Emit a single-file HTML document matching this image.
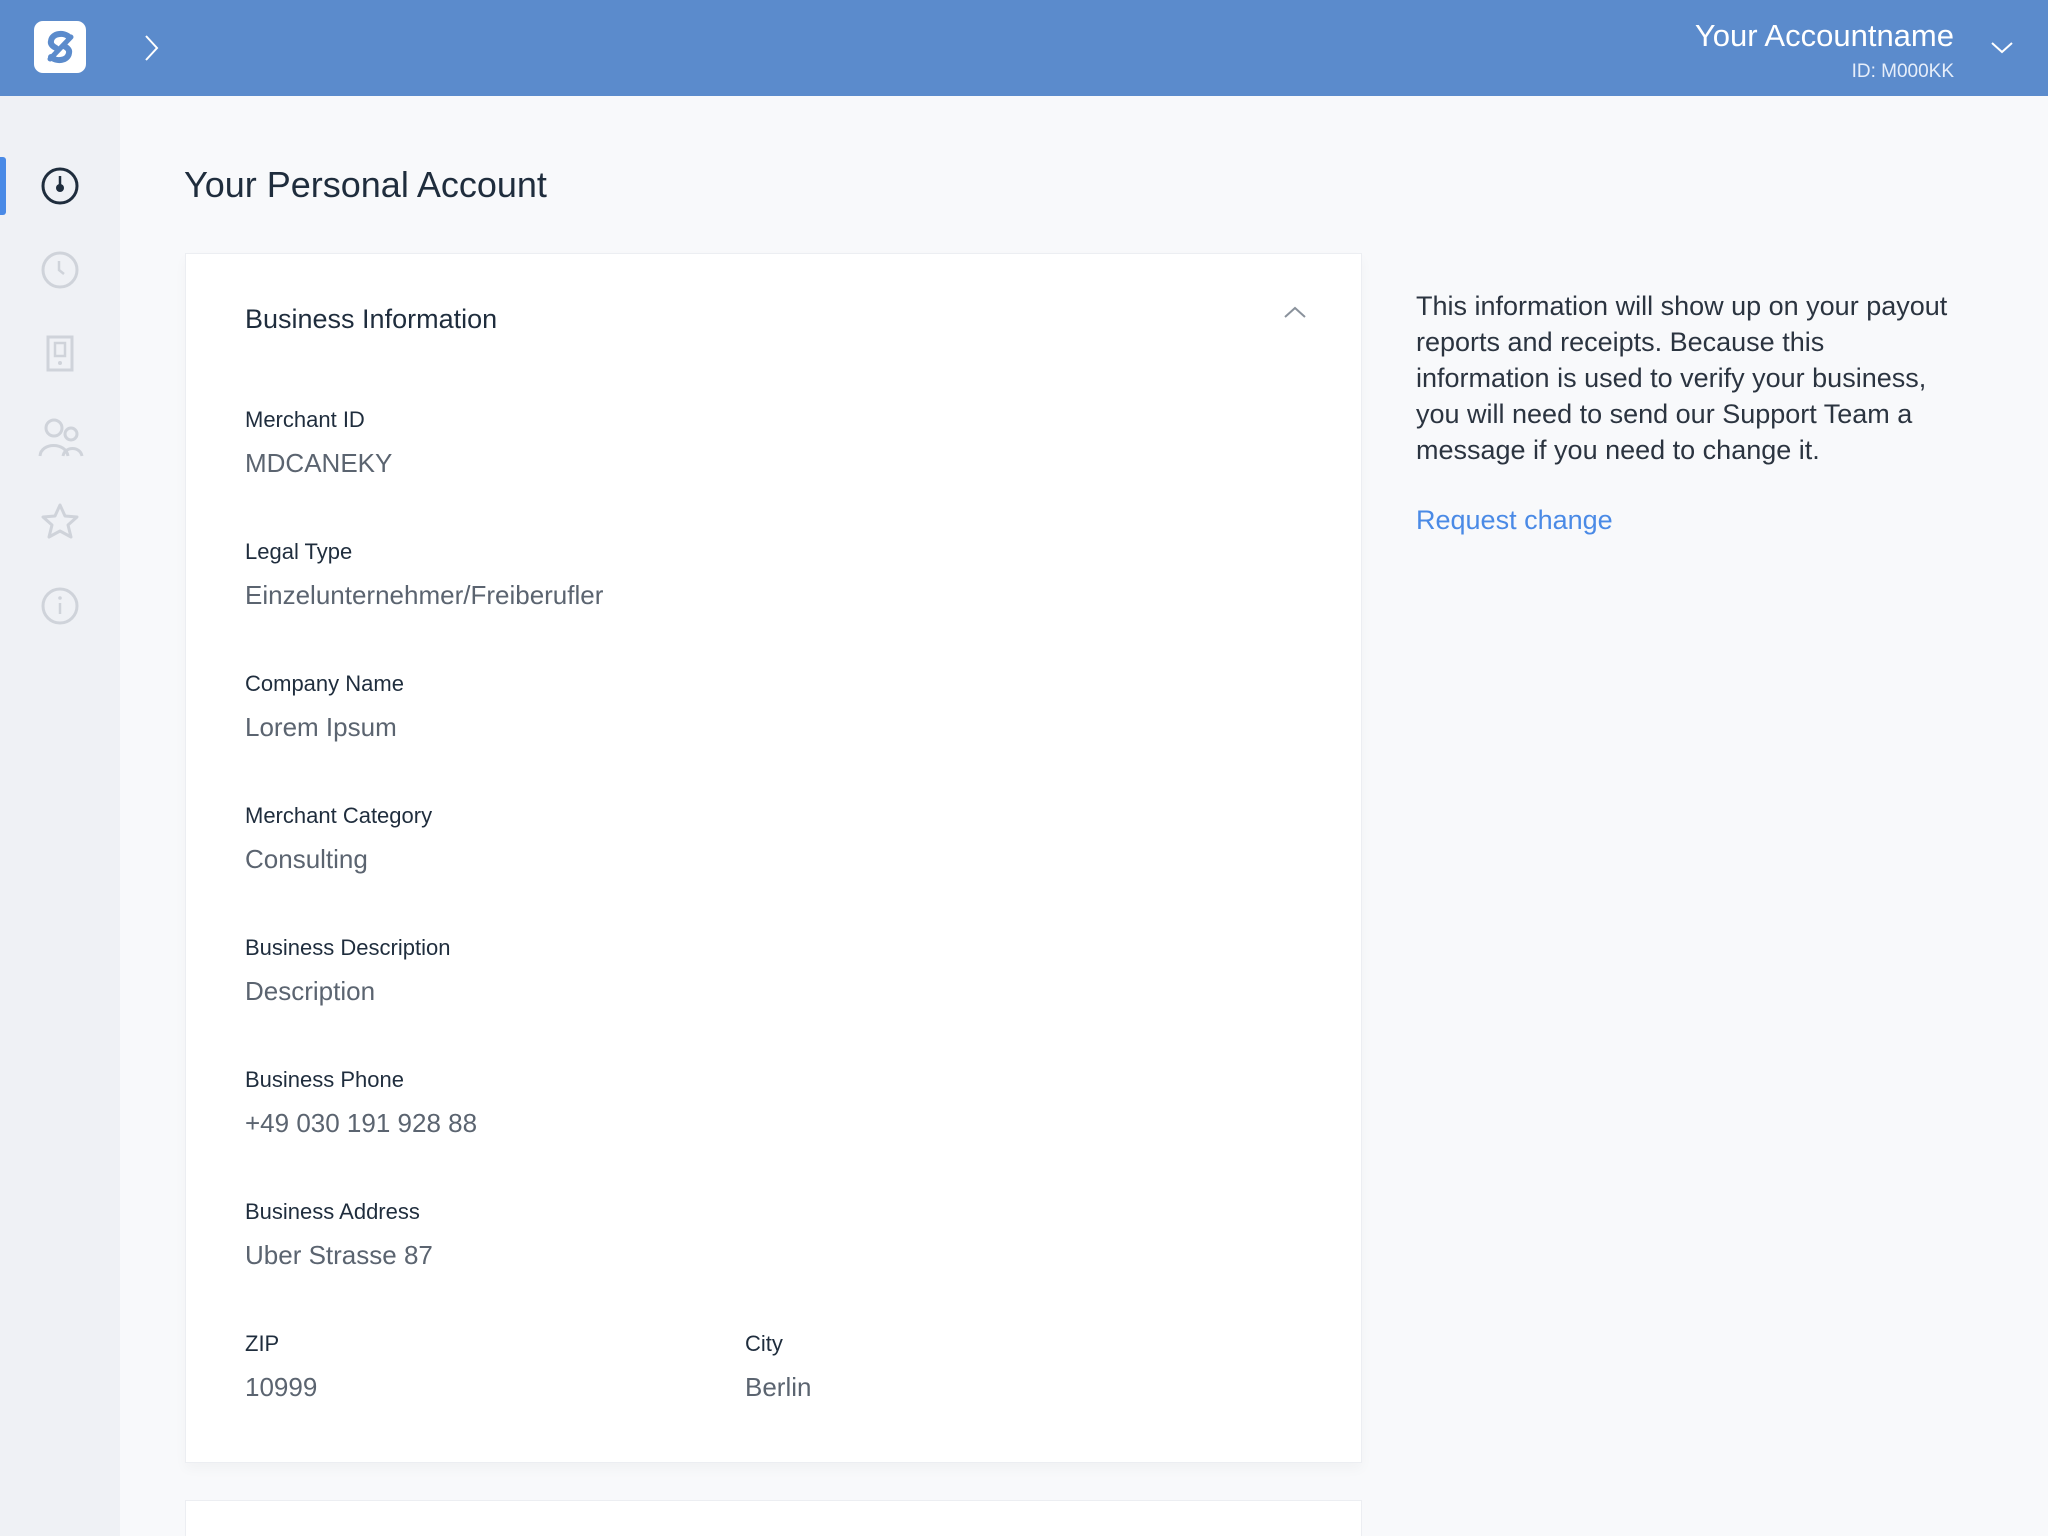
<!DOCTYPE html>
<html><head><meta charset="utf-8"><style>
*{margin:0;padding:0;box-sizing:border-box}
html,body{width:2048px;height:1536px;overflow:hidden}
body{background:#f8f9fb;font-family:"Liberation Sans",sans-serif;color:#1f2d3d;position:relative}
.hdr{position:absolute;left:0;top:0;width:2048px;height:96px;background:#5b8bcc}
.side{position:absolute;left:0;top:96px;width:120px;height:1440px;background:#eff1f5}
.abs{position:absolute}
.card{position:absolute;left:185px;top:253px;width:1177px;height:1210px;background:#fff;border:1px solid #eceef2;box-shadow:0 6px 12px rgba(0,0,0,0.03)}
.lbl{position:absolute;left:59px;font-size:22px;color:#1f2d3d;line-height:26px}
.val{position:absolute;left:59px;font-size:26px;color:#5b6470;line-height:30px}
.rt{position:absolute;left:1416px;top:288px;width:640px;font-size:27px;line-height:36px;color:#2b3440;white-space:nowrap}
</style></head><body>
<div class="hdr">
 <div class="abs" style="left:34px;top:21px;width:52px;height:52px;background:#fff;border-radius:9px">
  <svg width="52" height="52" viewBox="0 0 52 52"><path d="M35 16 C30 11 18 12 17 20 C16 24 20 26 22 27" fill="none" stroke="#5b8bcc" stroke-width="6" stroke-linecap="round"/><path d="M16 38 L37 16" stroke="#5b8bcc" stroke-width="5" stroke-linecap="round"/><path d="M17 36 C22 41 34 40 35 32 C36 28 32 26 30 25" fill="none" stroke="#5b8bcc" stroke-width="6" stroke-linecap="round"/></svg>
 </div>
 <svg class="abs" style="left:142px;top:34px" width="20" height="28"><path d="M4 2 L15 14 L4 26" fill="none" stroke="#fff" stroke-width="2"/></svg>
 <div class="abs" style="right:94px;top:18px;font-size:31px;color:#fff;text-align:right">Your Accountname</div>
 <div class="abs" style="right:94px;top:61px;font-size:19px;color:#e6eefa;text-align:right">ID: M000KK</div>
 <svg class="abs" style="left:1990px;top:40px" width="24" height="16"><path d="M2 3 L12 12 L22 3" fill="none" stroke="#fff" stroke-width="2"/></svg>
</div>
<div class="side">
 <div class="abs" style="left:0;top:61px;width:6px;height:58px;background:#4a8ae6;border-radius:0 3px 3px 0"></div>
 <svg class="abs" style="left:40px;top:70px" width="40" height="40"><circle cx="20" cy="20" r="17" fill="none" stroke="#1f2d3d" stroke-width="3"/><line x1="20" y1="10" x2="20" y2="20" stroke="#1f2d3d" stroke-width="2.5"/><circle cx="20" cy="22" r="4" fill="#1f2d3d"/></svg>
 <svg class="abs" style="left:40px;top:154px" width="40" height="40"><circle cx="20" cy="20" r="17" fill="none" stroke="#cfd3da" stroke-width="3"/><path d="M19 11 L19 20 L24 24" fill="none" stroke="#cfd3da" stroke-width="2.5"/></svg>
 <svg class="abs" style="left:44px;top:238px" width="32" height="40"><rect x="4" y="3" width="24" height="33" fill="none" stroke="#cfd3da" stroke-width="3"/><rect x="11" y="9" width="10" height="13" fill="none" stroke="#cfd3da" stroke-width="2.5"/><circle cx="16" cy="29" r="2" fill="#cfd3da"/></svg>
 <svg class="abs" style="left:38px;top:321px" width="46" height="42"><circle cx="16" cy="11" r="8" fill="none" stroke="#cfd3da" stroke-width="3"/><circle cx="33" cy="17" r="6" fill="none" stroke="#cfd3da" stroke-width="3"/><path d="M2 39 C3 25 28 25 30 39" fill="none" stroke="#cfd3da" stroke-width="3"/><path d="M25 39 C27 29 42 29 44 39" fill="none" stroke="#cfd3da" stroke-width="3"/></svg>
 <svg class="abs" style="left:40px;top:406px" width="40" height="40"><path d="M20 3 L25 14 L37 15 L28 23 L31 35 L20 29 L9 35 L12 23 L3 15 L15 14 Z" fill="none" stroke="#cfd3da" stroke-width="3" stroke-linejoin="round"/></svg>
 <svg class="abs" style="left:40px;top:490px" width="40" height="40"><circle cx="20" cy="20" r="17" fill="none" stroke="#cfd3da" stroke-width="3"/><line x1="20" y1="17" x2="20" y2="28" stroke="#cfd3da" stroke-width="2.5"/><circle cx="20" cy="12" r="1.8" fill="#cfd3da"/></svg>
</div>
<div class="abs" style="left:184px;top:164px;font-size:36px;color:#1f2d3d">Your Personal Account</div>
<div class="card">
 <div class="abs" style="left:59px;top:50px;font-size:27px;color:#1f2d3d">Business Information</div>
 <svg class="abs" style="left:1097px;top:50px" width="24" height="16"><path d="M2 13 L12 4 L22 13" fill="none" stroke="#8a929c" stroke-width="2"/></svg>
 <div class="lbl" style="top:153px">Merchant ID</div><div class="val" style="top:194px">MDCANEKY</div>
 <div class="lbl" style="top:285px">Legal Type</div><div class="val" style="top:326px">Einzelunternehmer/Freiberufler</div>
 <div class="lbl" style="top:417px">Company Name</div><div class="val" style="top:458px">Lorem Ipsum</div>
 <div class="lbl" style="top:549px">Merchant Category</div><div class="val" style="top:590px">Consulting</div>
 <div class="lbl" style="top:681px">Business Description</div><div class="val" style="top:722px">Description</div>
 <div class="lbl" style="top:813px">Business Phone</div><div class="val" style="top:854px">+49 030 191 928 88</div>
 <div class="lbl" style="top:945px">Business Address</div><div class="val" style="top:986px">Uber Strasse 87</div>
 <div class="lbl" style="top:1077px">ZIP</div><div class="val" style="top:1118px">10999</div>
 <div class="lbl" style="top:1077px;left:559px">City</div><div class="val" style="top:1118px;left:559px">Berlin</div>
</div>
<div class="abs" style="left:185px;top:1500px;width:1177px;height:36px;background:#fff;border:1px solid #eceef2;border-bottom:none"></div>
<div class="rt">This information will show up on your payout<br>reports and receipts. Because this<br>information is used to verify your business,<br>you will need to send our Support Team a<br>message if you need to change it.</div>
<div class="abs" style="left:1416px;top:505px;font-size:27px;color:#4a8ae6">Request change</div>
</body></html>
